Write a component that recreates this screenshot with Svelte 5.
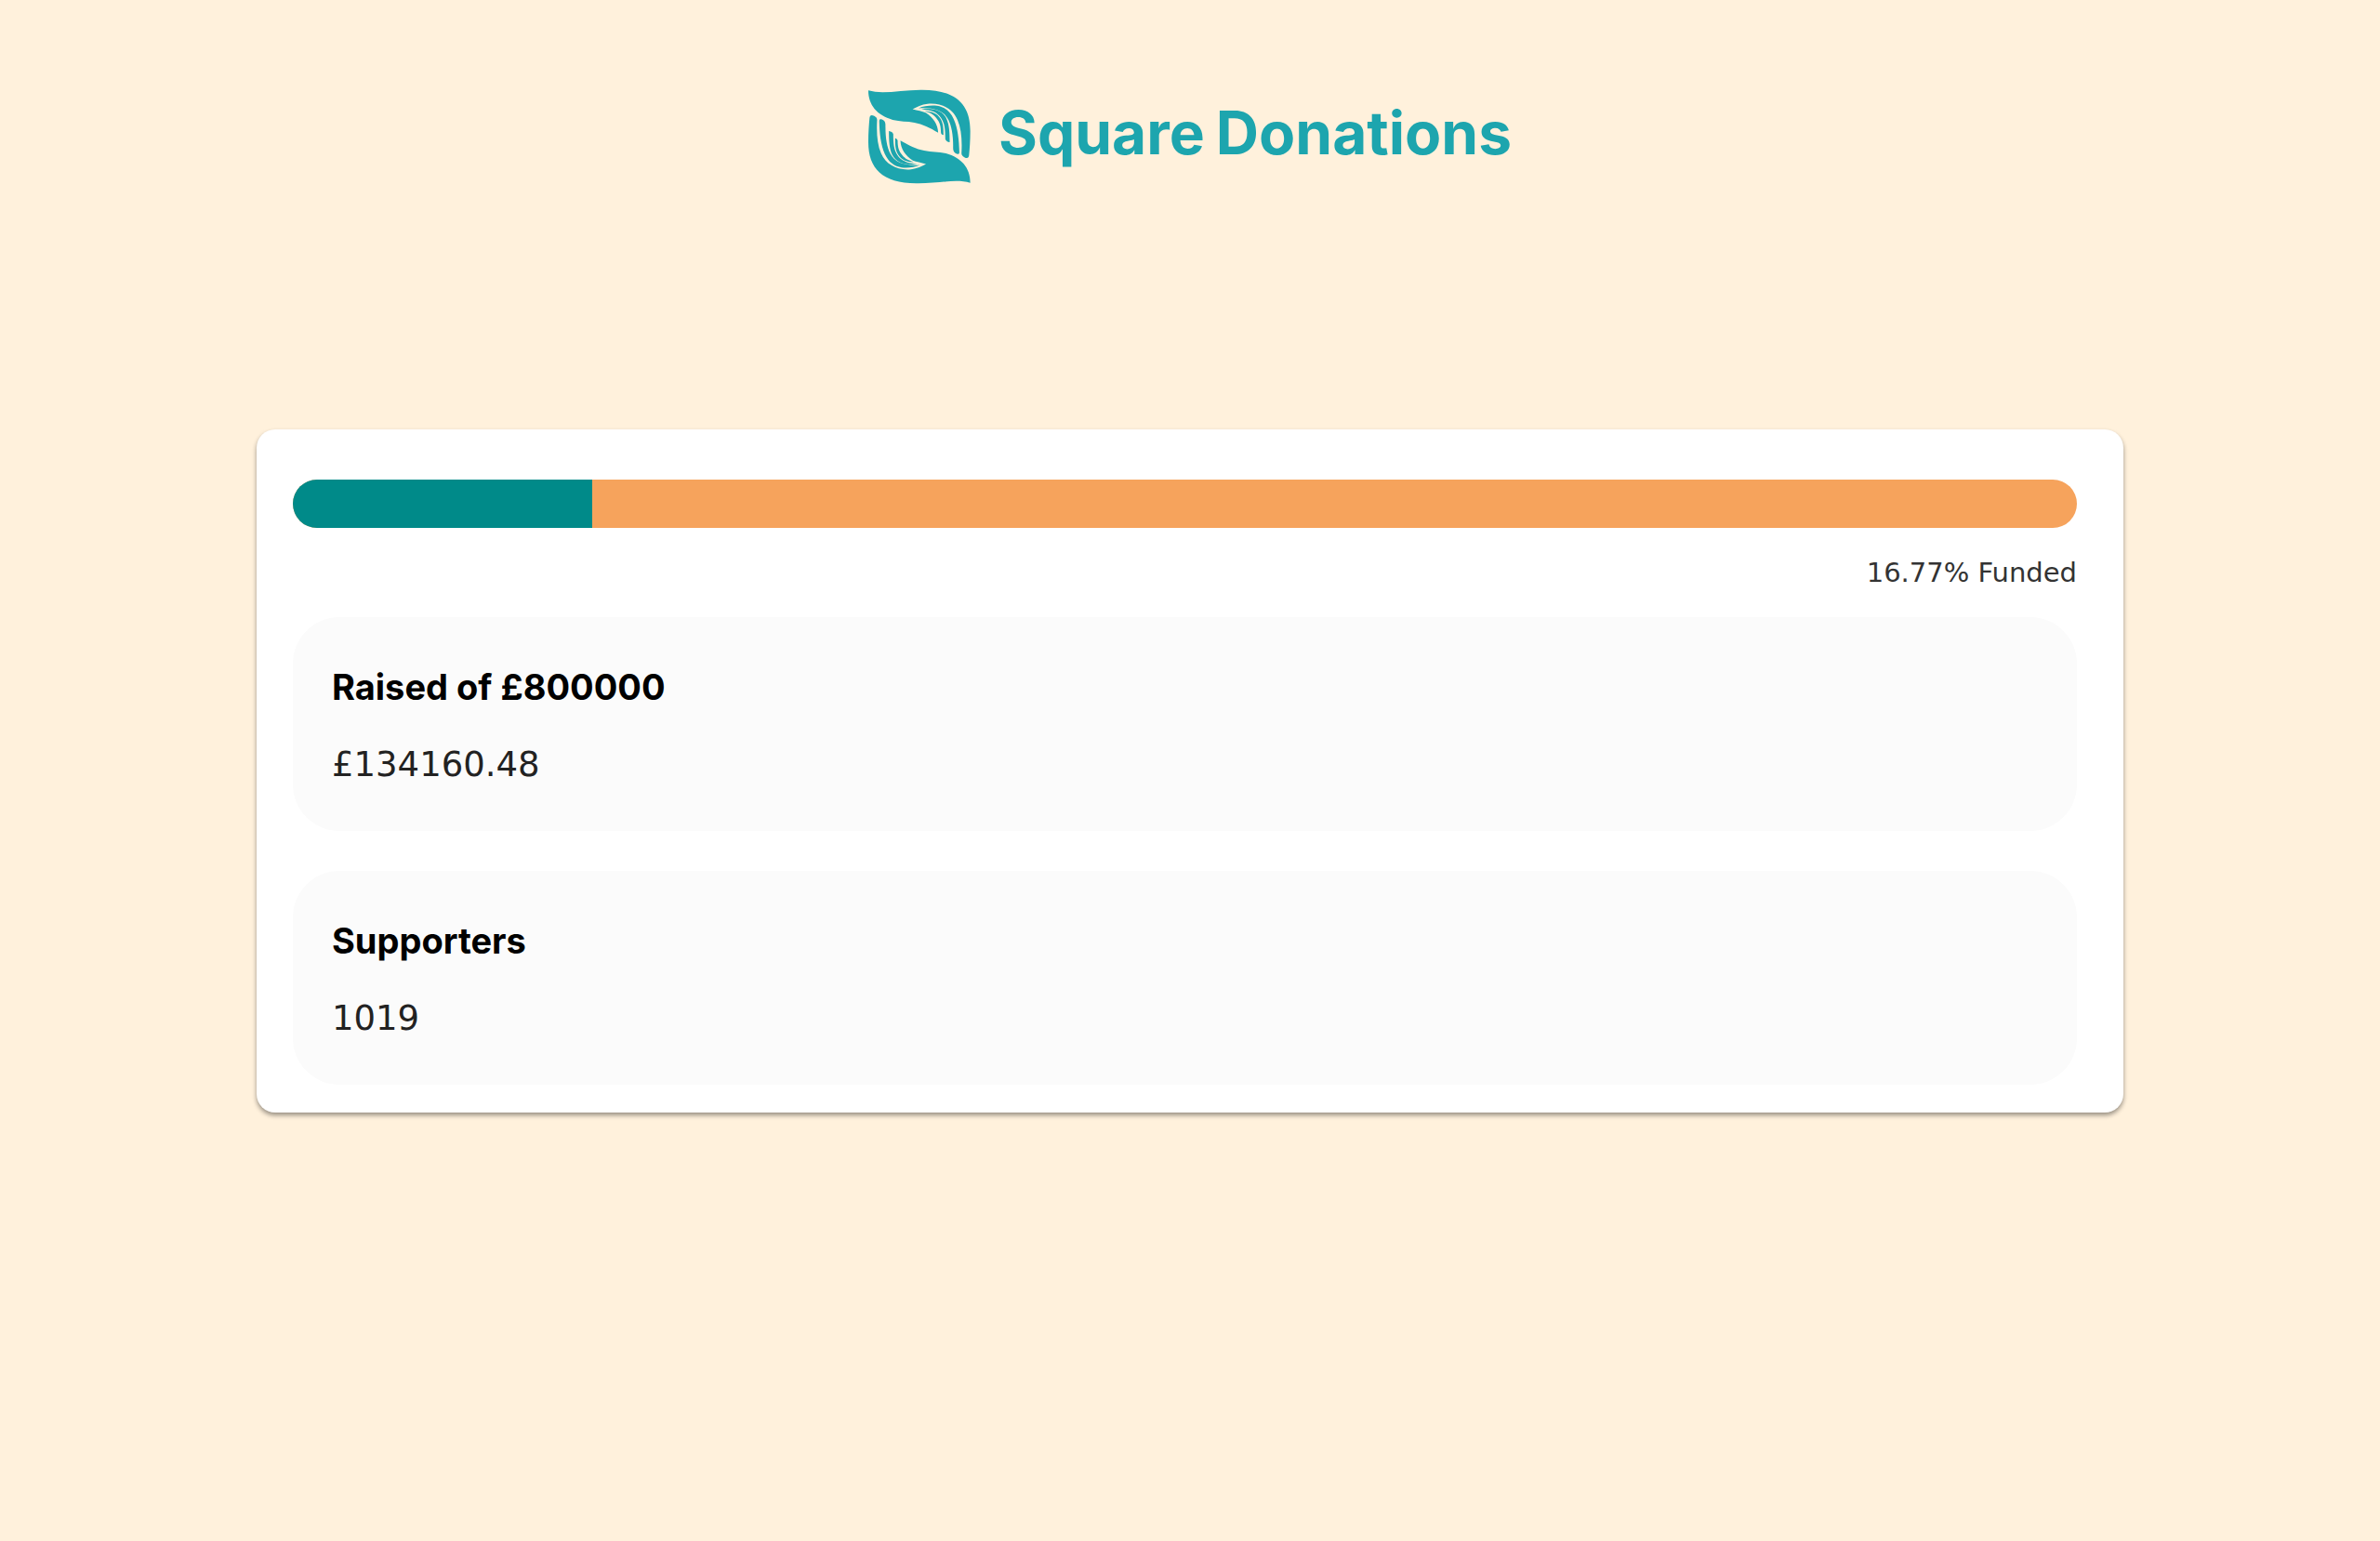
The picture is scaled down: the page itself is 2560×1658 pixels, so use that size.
<script>
  const goal = 800000;
  const raised = 134160.48;
  const supporters = 1019;

  const percent = ((raised / goal) * 100).toFixed(2);

  const stats = [
    { label: `Raised of £${goal}`, value: `£${raised}` },
    { label: 'Supporters', value: supporters },
  ];
</script>

<div class="page">
  <header class="header">
    <svg class="mark" viewBox="42 35 328 302" aria-hidden="true">
      <defs>
        <g id="hand">
          <path d="M42 38C90 52 150 35 215 36C325 36 369 85 369 168C369 200 367 225 365 246C364 256 358 257 350 252C343 248 340 244 341 236C343 195 340 160 328 132C312 95 275 77 232 81C213 83 197 91 184 98C200 102 215 105 226 109C250 125 265 145 266 173C240 158 215 145 190 141C165 136 145 138 120 132C70 118 42 85 42 38Z" />
          <path d="M203 95C220 87 245 85 262 87C285 90 304 104 316 130C329 160 333 195 334 236C334 245 326 242 321 239C313 233 314 226 314 215C314 180 309 152 299 132C284 102 252 92 203 95Z" />
          <path d="M212 98C255 93 280 104 292 127C302 147 303 175 303 204C296 203 291 200 289 194C289 162 287 144 276 127C264 108 246 101 212 98Z" />
          <path d="M222 104C248 105 263 112 273 128C283 144 283 162 283 181C279 180 275 177 275 173C275 152 271 139 260 126C250 114 240 109 222 104Z" />
        </g>
      </defs>
      <use href="#hand" />
      <use href="#hand" transform="rotate(180 205.5 186)" />
    </svg>
    <h1 class="brand"><span>Square</span> <span>Donations</span></h1>
  </header>

  <main class="card">
    <div class="track" role="progressbar" aria-label="Funded" aria-valuenow={percent} aria-valuemin="0" aria-valuemax="100">
      <div class="fill" style="width: {percent}%"></div>
    </div>
    <p class="funded">{percent}% Funded</p>

    <div class="stats">
      {#each stats as stat (stat.label)}
        <section class="stat">
          <h2>{stat.label}</h2>
          <p>{stat.value}</p>
        </section>
      {/each}
    </div>
  </main>
</div>

<style>
  :global(body) {
    margin: 0;
    background: #fff1dc;
    font-family: Inter, sans-serif;
  }

  .page {
    display: flow-root;
    min-height: 100vh;
  }

  .header {
    display: flex;
    justify-content: center;
    align-items: center;
    gap: 30px;
    padding-top: 96px;
  }

  .mark {
    width: 110px;
    height: 102px;
    fill: #1da5ae;
  }

  .brand {
    display: flex;
    gap: 12px;
    margin: 0;
    padding-bottom: 8px;
    color: #1da5ae;
    font-size: 64px;
    line-height: 80px;
    font-weight: 700;
  }

  .card {
    box-sizing: border-box;
    width: 78.44%;
    margin: 264px auto 0;
    padding: 54px 50px 30px 39px;
    border-radius: 20px;
    background: #fff;
    box-shadow: 0 3px 5px rgba(0, 0, 0, 0.4);
  }

  .track {
    height: 52px;
    border-radius: 26px;
    overflow: hidden;
    background: #f6a35c;
  }

  .fill {
    height: 100%;
    background: #008a89;
  }

  .funded {
    margin: 28px 0;
    color: #333;
    font-family: "DejaVu Sans", sans-serif;
    font-size: 29px;
    line-height: 40px;
    text-align: right;
  }

  .stats {
    display: flex;
    flex-direction: column;
    gap: 43px;
  }

  .stat {
    padding: 52px 42px 48px;
    border-radius: 50px;
    background: #fbfbfb;
  }

  .stat h2,
  .stat p {
    margin: 0;
    line-height: 46px;
  }

  .stat h2 {
    margin-bottom: 38px;
    color: #000;
    font-size: 38px;
    font-weight: 700;
  }

  .stat p {
    color: #222;
    font-family: "DejaVu Sans", sans-serif;
    font-size: 37px;
  }
</style>
